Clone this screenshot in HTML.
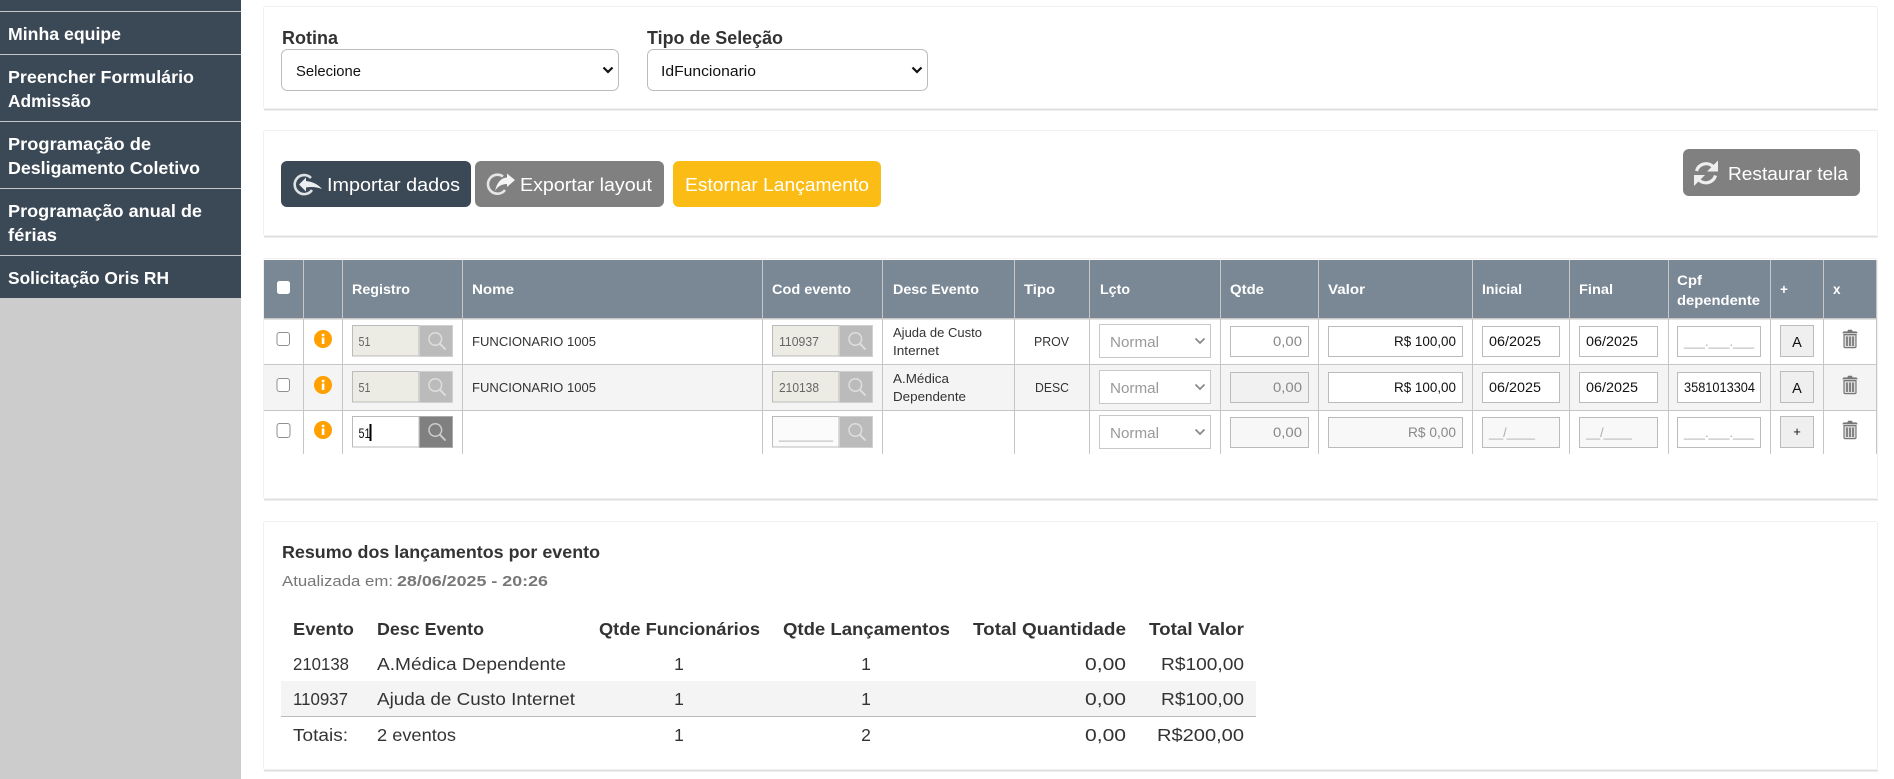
<!DOCTYPE html>
<html lang="pt-BR">
<head>
<meta charset="utf-8">
<title>Lançamentos</title>
<style>
html,body{margin:0;padding:0;background:#fff;width:1894px;height:779px;overflow:hidden}
svg{display:block}
text{font-family:"Liberation Sans",sans-serif;fill:#333}
.nav{font-size:17.5px;font-weight:700;fill:#fff}
.lb{font-size:18.5px;font-weight:700}
.sel{font-size:15px;fill:#111}
.btn{font-size:18.5px;fill:#fff}
.th{font-size:13.5px;font-weight:700;fill:#fff}
.td{font-size:13px;fill:#333}
.dis{font-size:13px;fill:#666}
.nrm{font-size:14.5px;fill:#999}
.gr{font-size:13.5px;fill:#888}
.blk{font-size:13.5px;fill:#111}
.mask{font-size:13px;fill:#aaa}
.sh{font-size:17.5px;font-weight:700;fill:#333}
.sd{font-size:17.5px;fill:#333}
</style>
</head>
<body>
<svg xmlns="http://www.w3.org/2000/svg" width="1894" height="779" viewBox="0 0 1894 779">
<defs>
<g id="mag"><circle cx="-1.7" cy="-2" r="6.3" fill="none" stroke-width="1.5"/><path d="M3 2.8L8 8" fill="none" stroke-width="1.9" stroke-linecap="round"/></g>
<path id="chev" d="M-4.5 -2.5L0 2L4.5 -2.5" fill="none" stroke="#888" stroke-width="1.7"/>
<path id="chevb" d="M-4.5 -2.5L0 2L4.5 -2.5" fill="none" stroke="#111" stroke-width="2.2"/>
<g id="info"><circle r="9" fill="#ffa000"/><rect x="-1.2" y="-1.5" width="2.6" height="6.5" fill="#fff"/><rect x="-1.2" y="-5.2" width="2.6" height="2.4" fill="#fff"/></g>
<g id="trash"><path d="M-7.5 -5.6Q-7.5 -7.6 -5.5 -7.6H-2.6L-2 -9.3H2L2.6 -7.6H5.5Q7.5 -7.6 7.5 -5.6Z" fill="#777"/><path d="M-6 -4.4H6V7.5Q6 8.6 4.8 8.6H-4.8Q-6 8.6 -6 7.5Z" fill="#dcdcdc" stroke="#777" stroke-width="1.2"/><path d="M-3 -2.5V7M0 -2.5V7M3 -2.5V7" stroke="#666" stroke-width="1.5" fill="none"/></g>
</defs>

<!-- sidebar -->
<rect x="0" y="0" width="241" height="779" fill="#cccccc"/>
<rect x="0" y="0" width="241" height="298" fill="#3b4855"/>
<g fill="#c4c8cc">
<rect x="0" y="11" width="241" height="1"/><rect x="0" y="54" width="241" height="1"/><rect x="0" y="121" width="241" height="1"/><rect x="0" y="188" width="241" height="1"/><rect x="0" y="255" width="241" height="1"/>
</g>
<text class="nav" x="8" y="40" textLength="113" lengthAdjust="spacingAndGlyphs">Minha equipe</text>
<text class="nav" x="8" y="83" textLength="186" lengthAdjust="spacingAndGlyphs">Preencher Formulário</text>
<text class="nav" x="8" y="107" textLength="83" lengthAdjust="spacingAndGlyphs">Admissão</text>
<text class="nav" x="8" y="150" textLength="143" lengthAdjust="spacingAndGlyphs">Programação de</text>
<text class="nav" x="8" y="174" textLength="192" lengthAdjust="spacingAndGlyphs">Desligamento Coletivo</text>
<text class="nav" x="8" y="217" textLength="194" lengthAdjust="spacingAndGlyphs">Programação anual de</text>
<text class="nav" x="8" y="241" textLength="49" lengthAdjust="spacingAndGlyphs">férias</text>
<text class="nav" x="8" y="284" textLength="161" lengthAdjust="spacingAndGlyphs">Solicitação Oris RH</text>

<!-- cards -->
<g fill="#fff" stroke="#f0f0f0">
<rect x="263.5" y="6.5" width="1614" height="102" rx="2"/>
<rect x="263.5" y="130.5" width="1614" height="105" rx="2"/>
<rect x="263.5" y="258.5" width="1614" height="240" rx="2"/>
<rect x="263.5" y="521.5" width="1614" height="248" rx="2"/>
</g>
<g fill="#dedede">
<rect x="264" y="109" width="1614" height="1.5"/>
<rect x="264" y="236" width="1614" height="1.5"/>
<rect x="264" y="499" width="1614" height="1.5"/>
<rect x="264" y="770" width="1614" height="1.5"/>
</g>

<!-- filters -->
<text class="lb" x="282" y="44" textLength="56" lengthAdjust="spacingAndGlyphs">Rotina</text>
<text class="lb" x="647" y="44" textLength="136" lengthAdjust="spacingAndGlyphs">Tipo de Seleção</text>
<rect x="281.5" y="49.5" width="337" height="41" rx="6" fill="#fff" stroke="#bbb"/>
<rect x="647.5" y="49.5" width="280" height="41" rx="6" fill="#fff" stroke="#bbb"/>
<text class="sel" x="296" y="76" textLength="65" lengthAdjust="spacingAndGlyphs">Selecione</text>
<text class="sel" x="661" y="76" textLength="95" lengthAdjust="spacingAndGlyphs">IdFuncionario</text>
<use href="#chevb" x="608" y="70"/>
<use href="#chevb" x="917" y="70"/>

<!-- buttons -->
<rect x="281" y="161" width="190" height="46" rx="6" fill="#3b4855"/>
<rect x="475" y="161" width="189" height="46" rx="6" fill="#808080"/>
<rect x="673" y="161" width="208" height="46" rx="6" fill="#fbbc15"/>
<rect x="1683" y="149" width="177" height="47" rx="6" fill="#808080"/>
<path d="M311 178A9.5 9.5 0 1 0 312 190" fill="none" stroke="#dfe2e5" stroke-width="2.6"/>
<path d="M299 184.5L306 177.5V181Q316 182 322 189Q314 186 306 187.5V191.5Z" fill="#eceef0"/>
<path d="M503 176.5A9.5 9.5 0 1 0 505 190" fill="none" stroke="#e6e6e6" stroke-width="2.6"/>
<path d="M515 180L507 173.5V177.5Q498 178 495 191Q499 184 507 184V187Z" fill="#f4f4f4"/>
<path d="M1696.5 171A10 10 0 0 1 1713 166.5" fill="none" stroke="#eee" stroke-width="3.2"/>
<path d="M1718 160.5V171.5H1707Z" fill="#eee"/>
<path d="M1715.5 175.5A10 10 0 0 1 1699 180" fill="none" stroke="#eee" stroke-width="3.2"/>
<path d="M1694 186V175H1705Z" fill="#eee"/>
<text class="btn" x="327" y="191" textLength="133" lengthAdjust="spacingAndGlyphs">Importar dados</text>
<text class="btn" x="520" y="191" textLength="132" lengthAdjust="spacingAndGlyphs">Exportar layout</text>
<text class="btn" x="685" y="191" textLength="184" lengthAdjust="spacingAndGlyphs">Estornar Lançamento</text>
<text class="btn" x="1728" y="180" textLength="120" lengthAdjust="spacingAndGlyphs">Restaurar tela</text>

<!-- table -->
<rect x="264" y="260" width="1613" height="58" fill="#7a8896"/>
<rect x="264" y="365" width="1613" height="45" fill="#f4f4f4"/>
<g fill="#c6c6c6">
<rect x="264" y="318" width="1613" height="1.5"/><rect x="264" y="364" width="1613" height="1"/><rect x="264" y="410" width="1613" height="1"/>
<rect x="303" y="260" width="1" height="194"/><rect x="342" y="260" width="1" height="194"/><rect x="462" y="260" width="1" height="194"/><rect x="762" y="260" width="1" height="194"/><rect x="882" y="260" width="1" height="194"/><rect x="1014" y="260" width="1" height="194"/><rect x="1089" y="260" width="1" height="194"/><rect x="1220" y="260" width="1" height="194"/><rect x="1318" y="260" width="1" height="194"/><rect x="1472" y="260" width="1" height="194"/><rect x="1569" y="260" width="1" height="194"/><rect x="1668" y="260" width="1" height="194"/><rect x="1770" y="260" width="1" height="194"/><rect x="1823" y="260" width="1" height="194"/><rect x="1876" y="260" width="1" height="194"/>
</g>
<rect x="277" y="281" width="13" height="13" rx="2.5" fill="#fff"/>
<text class="th" x="352" y="294" textLength="58" lengthAdjust="spacingAndGlyphs">Registro</text>
<text class="th" x="472" y="294" textLength="42" lengthAdjust="spacingAndGlyphs">Nome</text>
<text class="th" x="772" y="294" textLength="79" lengthAdjust="spacingAndGlyphs">Cod evento</text>
<text class="th" x="893" y="294" textLength="86" lengthAdjust="spacingAndGlyphs">Desc Evento</text>
<text class="th" x="1024" y="294" textLength="31" lengthAdjust="spacingAndGlyphs">Tipo</text>
<text class="th" x="1100" y="294" textLength="30" lengthAdjust="spacingAndGlyphs">Lçto</text>
<text class="th" x="1230" y="294" textLength="34" lengthAdjust="spacingAndGlyphs">Qtde</text>
<text class="th" x="1328" y="294" textLength="37" lengthAdjust="spacingAndGlyphs">Valor</text>
<text class="th" x="1482" y="294" textLength="40" lengthAdjust="spacingAndGlyphs">Inicial</text>
<text class="th" x="1579" y="294" textLength="34" lengthAdjust="spacingAndGlyphs">Final</text>
<text class="th" x="1677" y="285" textLength="25" lengthAdjust="spacingAndGlyphs">Cpf</text>
<text class="th" x="1677" y="305" textLength="83" lengthAdjust="spacingAndGlyphs">dependente</text>
<text class="th" x="1780" y="294">+</text>
<text class="th" x="1833" y="294">x</text>

<!-- checkboxes + info -->
<g fill="#fff" stroke="#8f8f8f">
<rect x="277" y="332.5" width="12.5" height="13" rx="2.5"/>
<rect x="277" y="378.5" width="12.5" height="13" rx="2.5"/>
<rect x="277" y="423.5" width="13" height="14" rx="2.5"/>
</g>
<use href="#info" x="323" y="339"/>
<use href="#info" x="323" y="385"/>
<use href="#info" x="323" y="430"/>

<!-- registro -->
<g stroke="#bbb">
<rect x="352.5" y="325.5" width="66.5" height="30.5" fill="#ecebe4"/>
<rect x="352.5" y="371.5" width="66.5" height="30.5" fill="#ecebe4"/>
<rect x="352.5" y="416.5" width="66.5" height="30.5" fill="#fff"/>
<rect x="772.5" y="325.5" width="66.5" height="30.5" fill="#ecebe4"/>
<rect x="772.5" y="371.5" width="66.5" height="30.5" fill="#ecebe4"/>
<rect x="772.5" y="416.5" width="66.5" height="30.5" fill="#fbfbfb"/>
</g>
<g stroke="#d0d0d0" fill="#bbbbbb">
<rect x="419.5" y="325.5" width="33" height="31"/>
<rect x="419.5" y="371.5" width="33" height="31"/>
<rect x="839.5" y="325.5" width="33" height="31"/>
<rect x="839.5" y="371.5" width="33" height="31"/>
<rect x="839.5" y="416.5" width="33" height="31"/>
</g>
<rect x="419.5" y="416.5" width="33" height="31" fill="#808080" stroke="#aaa"/>
<g stroke="#dedede">
<use href="#mag" x="437" y="341"/><use href="#mag" x="437" y="387"/><use href="#mag" x="857" y="341"/><use href="#mag" x="857" y="387"/><use href="#mag" x="857" y="432"/>
</g>
<use href="#mag" x="437" y="432" stroke="#ccc"/>
<text class="dis" x="358.5" y="346" textLength="12" lengthAdjust="spacingAndGlyphs">51</text>
<text class="dis" x="358.5" y="392" textLength="12" lengthAdjust="spacingAndGlyphs">51</text>
<text class="blk" x="358.5" y="438" textLength="12" lengthAdjust="spacingAndGlyphs">51</text>
<rect x="369.5" y="424" width="2" height="17" fill="#000"/>
<text class="td" x="472" y="346" textLength="124" lengthAdjust="spacingAndGlyphs">FUNCIONARIO 1005</text>
<text class="td" x="472" y="392" textLength="124" lengthAdjust="spacingAndGlyphs">FUNCIONARIO 1005</text>
<text class="dis" x="779" y="346" textLength="40" lengthAdjust="spacingAndGlyphs">110937</text>
<text class="dis" x="779" y="392" textLength="40" lengthAdjust="spacingAndGlyphs">210138</text>
<text class="mask" x="779" y="439" textLength="54" lengthAdjust="spacingAndGlyphs">_______</text>
<text class="td" x="893" y="337" textLength="89" lengthAdjust="spacingAndGlyphs">Ajuda de Custo</text>
<text class="td" x="893" y="355" textLength="46" lengthAdjust="spacingAndGlyphs">Internet</text>
<text class="td" x="893" y="383" textLength="56" lengthAdjust="spacingAndGlyphs">A.Médica</text>
<text class="td" x="893" y="401" textLength="73" lengthAdjust="spacingAndGlyphs">Dependente</text>
<text class="td" x="1034" y="346" textLength="35" lengthAdjust="spacingAndGlyphs">PROV</text>
<text class="td" x="1035" y="392" textLength="34" lengthAdjust="spacingAndGlyphs">DESC</text>

<!-- lcto selects -->
<g fill="#fff" stroke="#c8c8c8">
<rect x="1099.5" y="324.5" width="111" height="33"/>
<rect x="1099.5" y="370.5" width="111" height="33"/>
<rect x="1099.5" y="415.5" width="111" height="33"/>
</g>
<text class="nrm" x="1110" y="347" textLength="49" lengthAdjust="spacingAndGlyphs">Normal</text>
<text class="nrm" x="1110" y="393" textLength="49" lengthAdjust="spacingAndGlyphs">Normal</text>
<text class="nrm" x="1110" y="438" textLength="49" lengthAdjust="spacingAndGlyphs">Normal</text>
<use href="#chev" x="1200" y="341"/><use href="#chev" x="1200" y="387"/><use href="#chev" x="1200" y="432"/>

<!-- inputs -->
<g stroke="#bbb">
<rect x="1230.5" y="326.5" width="78" height="30" fill="#fff"/>
<rect x="1230.5" y="372.5" width="78" height="30" fill="#f1f1f1"/>
<rect x="1230.5" y="417.5" width="78" height="30" fill="#f7f7f7"/>
<rect x="1328.5" y="326.5" width="134" height="30" fill="#fff"/>
<rect x="1328.5" y="372.5" width="134" height="30" fill="#fff"/>
<rect x="1328.5" y="417.5" width="134" height="30" fill="#f8f8f8"/>
<rect x="1482.5" y="326.5" width="77" height="30" fill="#fff"/>
<rect x="1482.5" y="372.5" width="77" height="30" fill="#fff"/>
<rect x="1482.5" y="417.5" width="77" height="30" fill="#f8f8f8"/>
<rect x="1579.5" y="326.5" width="78" height="30" fill="#fff"/>
<rect x="1579.5" y="372.5" width="78" height="30" fill="#fff"/>
<rect x="1579.5" y="417.5" width="78" height="30" fill="#f8f8f8"/>
<rect x="1677.5" y="326.5" width="83" height="30" fill="#fff"/>
<rect x="1677.5" y="372.5" width="83" height="30" fill="#fff"/>
<rect x="1677.5" y="417.5" width="83" height="30" fill="#fff"/>
<rect x="1780.5" y="325.5" width="33" height="31" fill="#efefef"/>
<rect x="1780.5" y="371.5" width="33" height="31" fill="#efefef"/>
<rect x="1780.5" y="416.5" width="33" height="31" fill="#efefef"/>
</g>
<text class="gr" x="1273" y="346" textLength="29" lengthAdjust="spacingAndGlyphs">0,00</text>
<text class="gr" x="1273" y="392" textLength="29" lengthAdjust="spacingAndGlyphs">0,00</text>
<text class="gr" x="1273" y="437" textLength="29" lengthAdjust="spacingAndGlyphs">0,00</text>
<text class="blk" x="1394" y="346" textLength="62" lengthAdjust="spacingAndGlyphs">R$ 100,00</text>
<text class="blk" x="1394" y="392" textLength="62" lengthAdjust="spacingAndGlyphs">R$ 100,00</text>
<text class="gr" x="1408" y="437" textLength="48" lengthAdjust="spacingAndGlyphs">R$ 0,00</text>
<text class="blk" x="1489" y="346" textLength="52" lengthAdjust="spacingAndGlyphs">06/2025</text>
<text class="blk" x="1489" y="392" textLength="52" lengthAdjust="spacingAndGlyphs">06/2025</text>
<text class="mask" x="1489" y="437" textLength="46" lengthAdjust="spacingAndGlyphs">__/____</text>
<text class="blk" x="1586" y="346" textLength="52" lengthAdjust="spacingAndGlyphs">06/2025</text>
<text class="blk" x="1586" y="392" textLength="52" lengthAdjust="spacingAndGlyphs">06/2025</text>
<text class="mask" x="1586" y="437" textLength="46" lengthAdjust="spacingAndGlyphs">__/____</text>
<text class="mask" x="1684" y="346" textLength="70" lengthAdjust="spacingAndGlyphs">___.___.___</text>
<text class="blk" x="1684" y="392" textLength="71" lengthAdjust="spacingAndGlyphs">3581013304</text>
<text class="mask" x="1684" y="437" textLength="70" lengthAdjust="spacingAndGlyphs">___.___.___</text>
<text class="blk" x="1797" y="347" text-anchor="middle" style="font-size:14.5px">A</text>
<text class="blk" x="1797" y="393" text-anchor="middle" style="font-size:14.5px">A</text>
<text class="blk" x="1797" y="436" text-anchor="middle" style="font-size:13px">+</text>
<use href="#trash" x="1850" y="339"/><use href="#trash" x="1850" y="385"/><use href="#trash" x="1850" y="430"/>

<!-- summary -->
<text class="sh" x="282" y="558" textLength="318" lengthAdjust="spacingAndGlyphs">Resumo dos lançamentos por evento</text>
<text x="282" y="586" textLength="111" lengthAdjust="spacingAndGlyphs" style="font-size:15px;fill:#777">Atualizada em:</text>
<text x="397" y="586" textLength="151" lengthAdjust="spacingAndGlyphs" style="font-size:15px;font-weight:700;fill:#777">28/06/2025 - 20:26</text>
<rect x="281" y="681" width="975" height="35" fill="#f4f4f4"/>
<rect x="281" y="716" width="975" height="1" fill="#bbb"/>
<text class="sh" x="293" y="635" textLength="61" lengthAdjust="spacingAndGlyphs">Evento</text>
<text class="sh" x="377" y="635" textLength="107" lengthAdjust="spacingAndGlyphs">Desc Evento</text>
<text class="sh" x="599" y="635" textLength="161" lengthAdjust="spacingAndGlyphs">Qtde Funcionários</text>
<text class="sh" x="783" y="635" textLength="167" lengthAdjust="spacingAndGlyphs">Qtde Lançamentos</text>
<text class="sh" x="973" y="635" textLength="153" lengthAdjust="spacingAndGlyphs">Total Quantidade</text>
<text class="sh" x="1149" y="635" textLength="95" lengthAdjust="spacingAndGlyphs">Total Valor</text>

<text class="sd" x="293" y="670" textLength="56" lengthAdjust="spacingAndGlyphs">210138</text>
<text class="sd" x="377" y="670" textLength="189" lengthAdjust="spacingAndGlyphs">A.Médica Dependente</text>
<text class="sd" x="679" y="670" text-anchor="middle">1</text>
<text class="sd" x="866" y="670" text-anchor="middle">1</text>
<text class="sd" x="1085" y="670" textLength="41" lengthAdjust="spacingAndGlyphs">0,00</text>
<text class="sd" x="1161" y="670" textLength="83" lengthAdjust="spacingAndGlyphs">R$100,00</text>

<text class="sd" x="293" y="705" textLength="55" lengthAdjust="spacingAndGlyphs">110937</text>
<text class="sd" x="377" y="705" textLength="198" lengthAdjust="spacingAndGlyphs">Ajuda de Custo Internet</text>
<text class="sd" x="679" y="705" text-anchor="middle">1</text>
<text class="sd" x="866" y="705" text-anchor="middle">1</text>
<text class="sd" x="1085" y="705" textLength="41" lengthAdjust="spacingAndGlyphs">0,00</text>
<text class="sd" x="1161" y="705" textLength="83" lengthAdjust="spacingAndGlyphs">R$100,00</text>

<text class="sd" x="293" y="741" textLength="55" lengthAdjust="spacingAndGlyphs">Totais:</text>
<text class="sd" x="377" y="741" textLength="79" lengthAdjust="spacingAndGlyphs">2 eventos</text>
<text class="sd" x="679" y="741" text-anchor="middle">1</text>
<text class="sd" x="866" y="741" text-anchor="middle">2</text>
<text class="sd" x="1085" y="741" textLength="41" lengthAdjust="spacingAndGlyphs">0,00</text>
<text class="sd" x="1157" y="741" textLength="87" lengthAdjust="spacingAndGlyphs">R$200,00</text>
</svg>
</body>
</html>
